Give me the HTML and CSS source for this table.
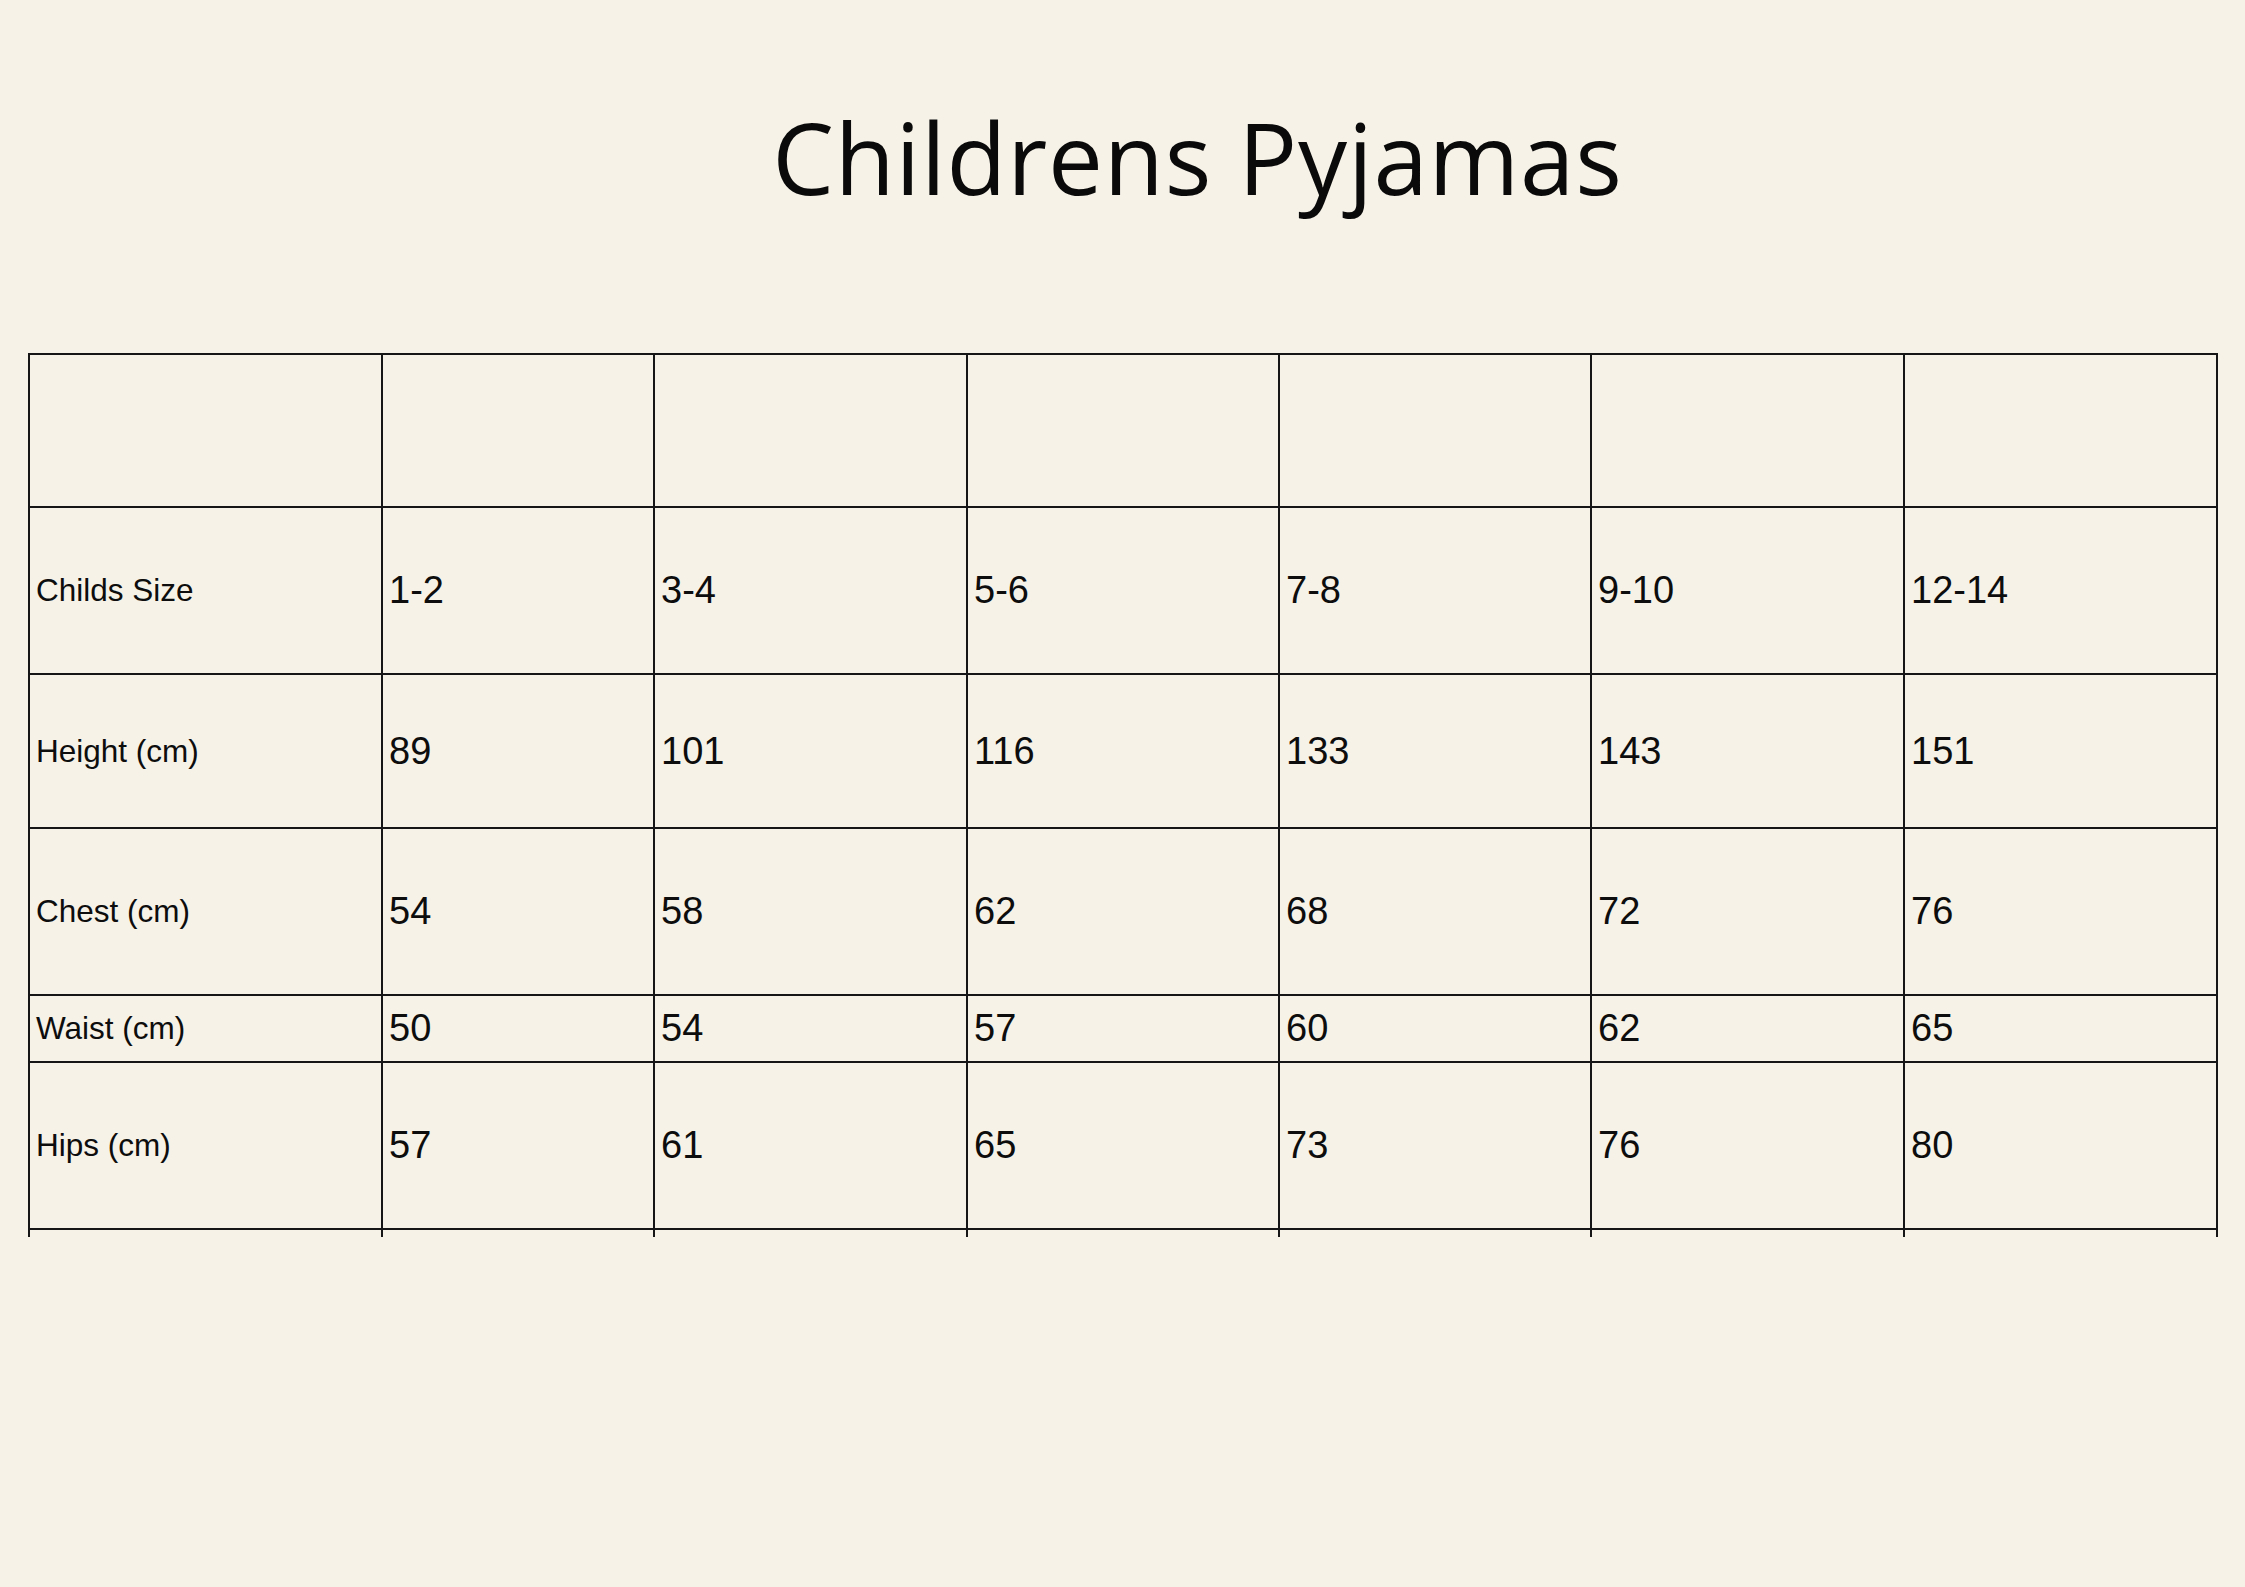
FILE: index.html
```html
<!DOCTYPE html>
<html lang="en">
<head>
<meta charset="utf-8">
<title>Childrens Pyjamas</title>
<link rel="stylesheet" href="styles.css">
</head>
<body>
<header class="title-wrap">
  <h1 class="title">Childrens Pyjamas</h1>
</header>
<main class="chart" role="table" aria-label="Childrens pyjamas size chart">
  <div class="cell row-head"></div>
  <div class="cell row-head"></div>
  <div class="cell row-head"></div>
  <div class="cell row-head"></div>
  <div class="cell row-head"></div>
  <div class="cell row-head"></div>
  <div class="cell row-head"></div>

  <div class="cell label">Childs Size</div>
  <div class="cell value">1-2</div>
  <div class="cell value">3-4</div>
  <div class="cell value">5-6</div>
  <div class="cell value">7-8</div>
  <div class="cell value">9-10</div>
  <div class="cell value">12-14</div>

  <div class="cell label">Height (cm)</div>
  <div class="cell value">89</div>
  <div class="cell value">101</div>
  <div class="cell value">116</div>
  <div class="cell value">133</div>
  <div class="cell value">143</div>
  <div class="cell value">151</div>

  <div class="cell label">Chest (cm)</div>
  <div class="cell value">54</div>
  <div class="cell value">58</div>
  <div class="cell value">62</div>
  <div class="cell value">68</div>
  <div class="cell value">72</div>
  <div class="cell value">76</div>

  <div class="cell label">Waist (cm)</div>
  <div class="cell value">50</div>
  <div class="cell value">54</div>
  <div class="cell value">57</div>
  <div class="cell value">60</div>
  <div class="cell value">62</div>
  <div class="cell value">65</div>

  <div class="cell label">Hips (cm)</div>
  <div class="cell value">57</div>
  <div class="cell value">61</div>
  <div class="cell value">65</div>
  <div class="cell value">73</div>
  <div class="cell value">76</div>
  <div class="cell value">80</div>

  <div class="cell stub"></div>
  <div class="cell stub"></div>
  <div class="cell stub"></div>
  <div class="cell stub"></div>
  <div class="cell stub"></div>
  <div class="cell stub"></div>
  <div class="cell stub"></div>
</main>
</body>
</html>
```

FILE: styles.css
```css
html, body {
  margin: 0;
  padding: 0;
  background: #f6f2e8;
}

body {
  width: 2245px;
  height: 1587px;
  overflow: hidden;
  color: #0d0d0d;
  font-family: "Liberation Sans", Arial, sans-serif;
}

.title-wrap {
  display: flex;
  justify-content: center;
  padding: 108px 0 0 150px;
}

.title {
  margin: 0;
  font-family: "Open Sans", "Liberation Sans", sans-serif;
  font-weight: 400;
  font-size: 98px;
  line-height: 98px;
  letter-spacing: 0.75px;
  color: #0a0a0a;
}

.chart {
  display: grid;
  grid-template-columns: 353px 272px 313px 312px 312px 313px 313px;
  grid-template-rows: 153px 167px 154px 167px 67px 167px 7px;
  width: max-content;
  margin: 147px 0 0 28px;
  border-left: 2px solid #161616;
  border-top: 2px solid #161616;
}

.cell {
  box-sizing: border-box;
  border-right: 2px solid #161616;
  border-bottom: 2px solid #161616;
  display: flex;
  align-items: center;
  padding-left: 6px;
  white-space: nowrap;
}

.label {
  font-size: 31.5px;
}

.value {
  font-size: 38px;
}

.stub {
  border-bottom: none;
}
```
